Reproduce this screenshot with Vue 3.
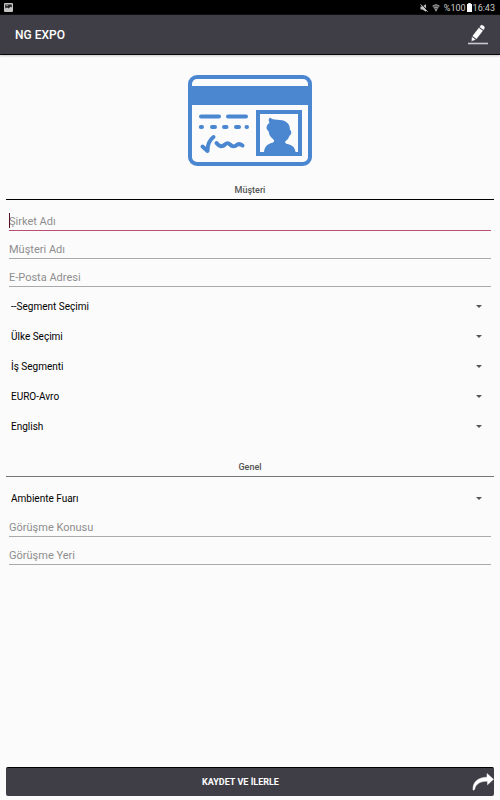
<script setup>
import { ref } from 'vue'

const contactFields = ref([
  { id: 'company', label: 'Şirket Adı', type: 'text', value: '', active: true },
  { id: 'customer', label: 'Müşteri Adı', type: 'text', value: '' },
  { id: 'email', label: 'E-Posta Adresi', type: 'email', value: '' }
])

const contactSelects = ref([
  { id: 'segment', label: 'Segment', value: '--Segment Seçimi' },
  { id: 'country', label: 'Ülke', value: 'Ülke Seçimi' },
  { id: 'business', label: 'İş', value: 'İş Segmenti' },
  { id: 'currency', label: 'Para birimi', value: 'EURO-Avro' },
  { id: 'language', label: 'Dil', value: 'English' }
])

const fair = ref('Ambiente Fuarı')

const meetingFields = ref([
  { id: 'topic', label: 'Görüşme Konusu', value: '' },
  { id: 'place', label: 'Görüşme Yeri', value: '' }
])
</script>

<template>
  <div class="screen">
    <div class="status">
      <svg class="status-picture" viewBox="0 0 9 9" aria-hidden="true">
        <rect width="9" height="9" rx="1" fill="#c4c4c4" />
        <path d="M1.200 1.400h6.600v3.200L6.400 3.800 4.800 5.400 3 4.400 1.200 5.600z" fill="#222" />
        <circle cx="3" cy="2.500" r=".7" fill="#c4c4c4" />
      </svg>
      <div class="status-right">
        <svg class="status-mute" viewBox="0 0 8 8" aria-hidden="true">
          <path d="M.5 2.400h1.800L6 .2v7.600L2.300 5.500H.5z" fill="#c4c4c4" />
          <path d="M1.400 0l6.600 7" stroke="#000" stroke-width="1" />
          <path d="M.6.4l7 7.400" stroke="#c4c4c4" stroke-width="1" />
        </svg>
        <svg class="status-wifi" viewBox="0 0 8 8" aria-hidden="true">
          <path d="M.4 2.200Q4-.9 7.600 2.200L4 7.800z" fill="#555" />
          <path d="M.5 2Q4-.9 7.500 2M2 4Q4 2.300 6 4" fill="none" stroke="#aaa" stroke-width=".9" />
          <path d="M2.800 5.200h2.400L4 7.800z" fill="#aaa" />
        </svg>
        <span>%100</span>
        <svg class="status-battery" viewBox="0 0 5 9" aria-hidden="true">
          <path d="M1.300 0h2.400v1H5v8H0V1h1.300z" fill="#fff" />
        </svg>
        <span>16:43</span>
      </div>
    </div>

    <header class="bar">
      <h1>NG EXPO</h1>
      <button class="edit" type="button" aria-label="Düzenle">
        <svg viewBox="0 0 22 22" aria-hidden="true">
          <g fill="#fff" stroke="#22222b" stroke-width=".3">
            <path d="M13.200 1.900Q14.400 .200 16 1.300L17.200 2.300Q18.500 3.600 17.400 5L16.500 6.200 12.300 3z" />
            <path d="M11.900 3.500L16.100 6.800 9.500 15.200 5.300 11.900z" />
            <path d="M4.900 12.500L8.900 15.700 4.300 17.400z" />
          </g>
          <path d="M1 19.500h20" stroke="#c9c8d0" stroke-width="1.600" />
        </svg>
      </button>
    </header>

    <main class="content">
      <svg class="card" viewBox="0 0 124 91" aria-hidden="true">
        <rect x="2" y="2" width="120" height="87" rx="7" fill="#fbfbfb" stroke="#4b87d1" stroke-width="4" />
        <path d="M2 11h120v19H2z" fill="#4b87d1" />
        <g fill="none" stroke="#4b87d1" stroke-width="4" stroke-linecap="round" stroke-linejoin="round">
          <path d="M13 41.500h18M40 41.500h18M12.800 52h1.200M24 52h3M36 52h2.500M48 52h3M58.500 52h.500" />
          <path d="M14.500 71.500l5 4.500c0-6 2-11 6-14" />
          <path d="M28.500 68c3 4 6 4 8.500 1.500 2-2 3-2 5 0 3 3 5 2 7.500 0 2-1 3-.500 5 1" />
        </g>
        <path fill-rule="evenodd" d="M68 35h46v46H68zM72 39v38h38V39z" fill="#4b87d1" />
        <path d="M76 77c.500-6 4-8 9-9.500 1.500-.600 1.500-2.500 0-3.500-3-2-4-5-4.500-8-3-2-2.500-6 1-8-1-2-1.300-4 .500-5.500 1.500 1.800 4 2 7 2.200 8 0 13 3 13 10 2 1.500 1.500 5-.500 6-1 2.500-2 4-4 5.500-1 1 0 2 1 2.500 5 1 8.500 3 9 8.300z" fill="#4b87d1" />
      </svg>

      <section class="group">
        <h2>Müşteri</h2>
        <div class="fields">
          <label v-for="f in contactFields" :key="f.id" class="field" :class="{ active: f.active }" :for="f.id">
            <span v-if="f.active" class="caret"></span>
            <input :id="f.id" v-model="f.value" :type="f.type" :placeholder="f.label" :aria-label="f.label" />
          </label>
        </div>
        <div class="selects">
          <label v-for="s in contactSelects" :key="s.id" class="select" :for="s.id">
            <select :id="s.id" v-model="s.value" :aria-label="s.label">
              <option>{{ s.value }}</option>
            </select>
            <svg viewBox="0 0 6 3" aria-hidden="true"><path d="M0 0h6L3 3z" /></svg>
          </label>
        </div>
      </section>

      <section class="group general">
        <h2>Genel</h2>
        <label class="select" for="fair">
          <select id="fair" v-model="fair" aria-label="Fuar">
            <option>Ambiente Fuarı</option>
          </select>
          <svg viewBox="0 0 6 3" aria-hidden="true"><path d="M0 0h6L3 3z" /></svg>
        </label>
        <div class="fields">
          <label v-for="f in meetingFields" :key="f.id" class="field" :for="f.id">
            <input :id="f.id" v-model="f.value" type="text" :placeholder="f.label" :aria-label="f.label" />
          </label>
        </div>
      </section>
    </main>

    <footer>
      <button class="save" type="button">
        <span>KAYDET VE İLERLE</span>
        <svg viewBox="0 0 22 18" aria-hidden="true">
          <path d="M1 17.200C.500 9 6 4.300 15 4.200V.600L21.500 6.300 15.500 11.800V8.300C9 8 3.500 10.500 2.600 16.500z" fill="#fff" stroke="#fff" stroke-width=".5" />
        </svg>
      </button>
    </footer>
  </div>
</template>

<style>
body {
  margin: 0;
  background: #fbfbfb;
}
</style>

<style scoped>
.screen {
  display: flex;
  flex-direction: column;
  min-height: 100vh;
  font-family: Roboto, "Liberation Sans", sans-serif;
  color: #000;
}

.status {
  display: flex;
  align-items: center;
  justify-content: space-between;
  height: 15px;
  padding: 0 5px 0 4px;
  background: #000;
  color: #ccc;
  font-size: 9px;
}

.status-right {
  display: flex;
  align-items: center;
  gap: 1px;
}

.status-picture {
  width: 9px;
  height: 9px;
}

.status-mute,
.status-wifi {
  width: 8px;
  height: 8px;
  margin-right: 3px;
}

.status-battery {
  width: 5px;
  height: 9px;
}

.bar {
  display: flex;
  align-items: center;
  justify-content: space-between;
  box-sizing: border-box;
  height: 40px;
  padding: 0 11px 0 15px;
  background: #3f3e47;
  border-bottom: 1px solid #08080c;
  box-shadow: 0 1px 2px #c8c8c8;
}

h1 {
  margin: 0;
  color: #fff;
  font-size: 12px;
  font-weight: 500;
}

button {
  padding: 0;
  border: 0;
  font-family: inherit;
}

.edit {
  display: block;
  width: 22px;
  height: 22px;
  background: none;
}

.edit svg {
  display: block;
}

.content {
  flex: 1;
  padding: 20px 6px 0;
}

.card {
  display: block;
  width: 124px;
  height: 91px;
  margin: 0 auto 16px;
}

h2 {
  margin: 0;
  padding-top: 1px;
  padding-bottom: 1px;
  border-bottom: 1px solid #000;
  color: #555;
  font-size: 9px;
  font-weight: 500;
  line-height: 15px;
  text-align: center;
}

.fields {
  display: grid;
  gap: 4px;
  padding: 0 3px;
}

.group > h2 + .fields {
  padding-top: 7px;
}

.field {
  position: relative;
  box-sizing: border-box;
  display: block;
  height: 24px;
  padding-top: 6px;
  border-bottom: 1px solid #aaa;
}

.field.active {
  border-bottom-color: #b94f72;
}

.caret {
  position: absolute;
  top: 6px;
  left: 0;
  width: 1px;
  height: 15px;
  background: #5a0f25;
}

input {
  display: block;
  width: 100%;
  height: 17px;
  padding: 0;
  border: 0;
  outline: 0;
  background: none;
  color: #000;
  font-family: inherit;
  font-size: 11px;
}

input::placeholder {
  color: #8e8e8e;
  opacity: 1;
}

.selects {
  padding-top: 4px;
}

.select {
  display: grid;
  align-items: center;
  height: 30px;
}

.select select,
.select svg {
  grid-area: 1 / 1;
}

.select select {
  width: 100%;
  height: 30px;
  padding: 2px 24px 0 5px;
  border: 0;
  appearance: none;
  background: none;
  color: #000;
  font-family: inherit;
  font-size: 10px;
  line-height: 20px;
}

.select svg {
  justify-self: end;
  width: 6px;
  height: 3px;
  margin-right: 12px;
  fill: #555;
  pointer-events: none;
}

.general {
  padding-top: 18px;
}

.general h2 {
  margin-bottom: 6px;
  border-color: #777;
}

footer {
  padding: 0 6px 4px;
}

.save {
  display: flex;
  align-items: center;
  box-sizing: border-box;
  width: 100%;
  height: 29px;
  padding-left: 3px;
  border-top: 1px solid #000;
  border-radius: 2px;
  background: #3f3e47;
  color: #fff;
  font-size: 9px;
  font-weight: 700;
}

.save span {
  flex: 1;
}

.save svg {
  width: 22px;
  height: 18px;
}
</style>
